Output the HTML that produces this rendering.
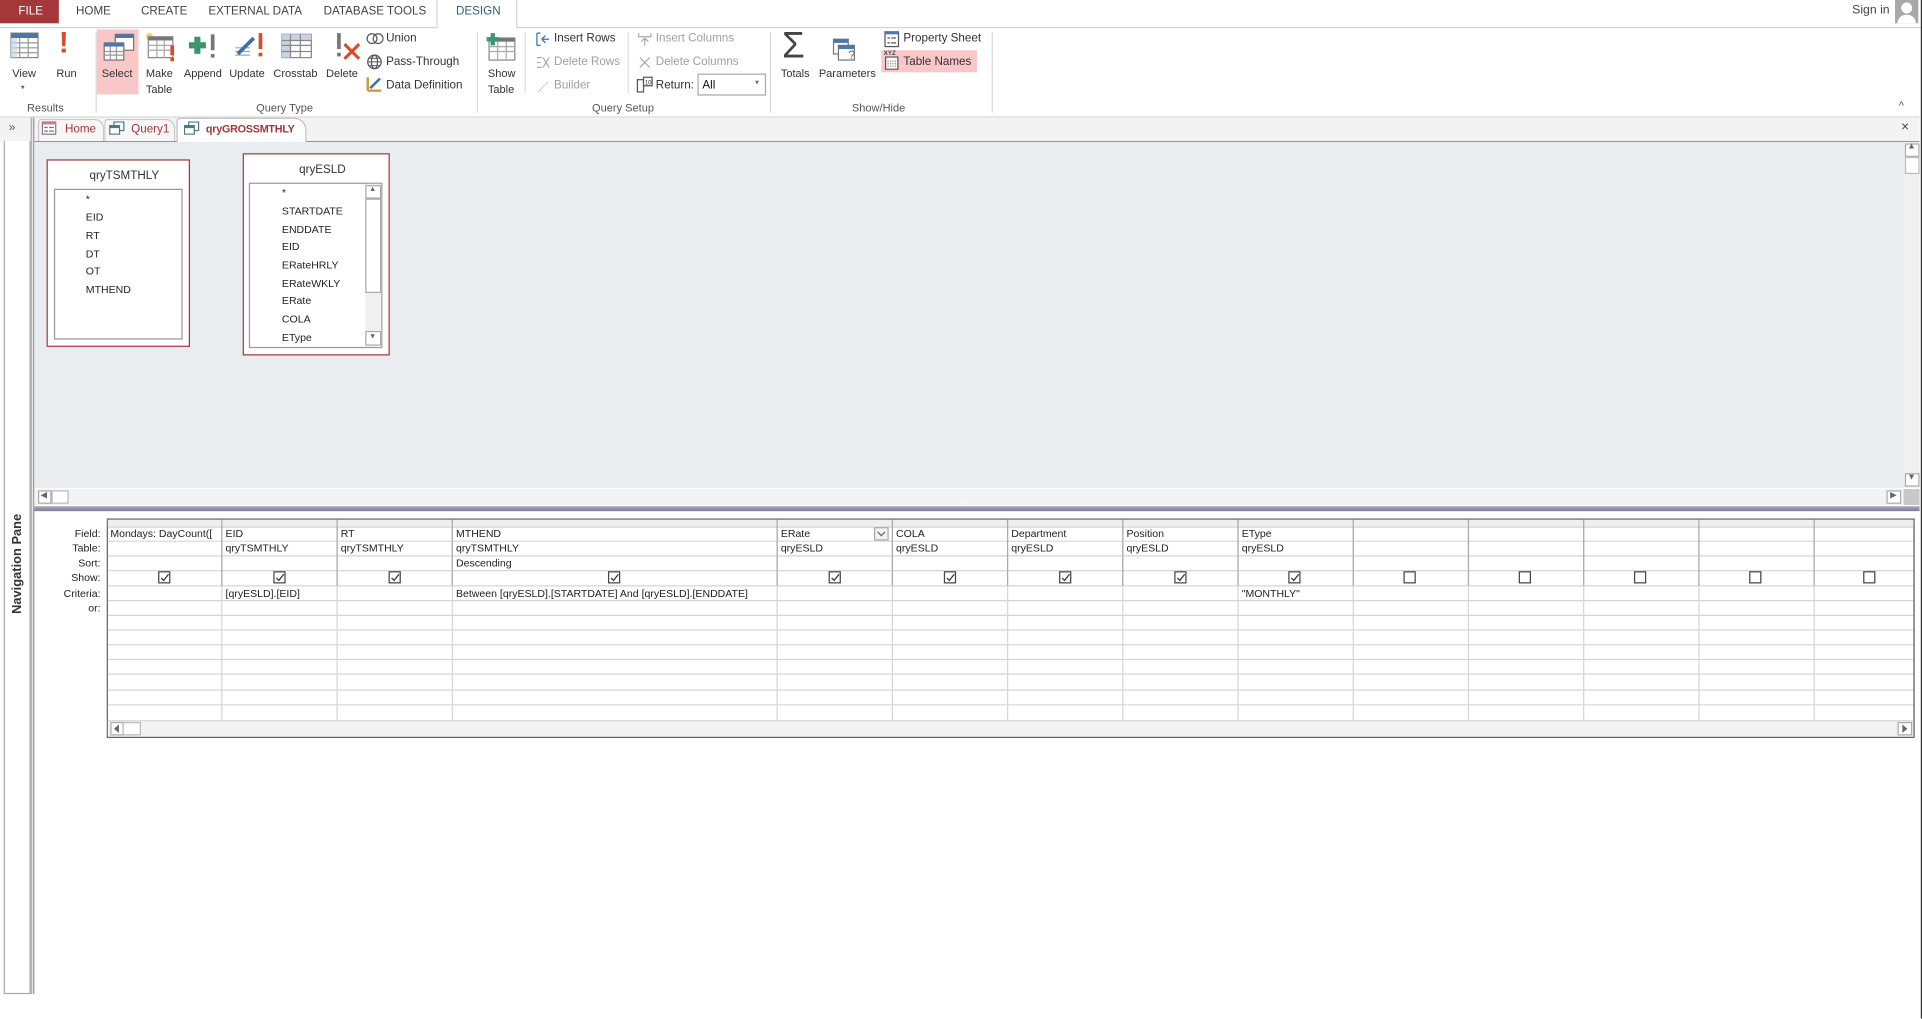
<!DOCTYPE html>
<html><head><meta charset="utf-8"><style>
*{margin:0;padding:0;box-sizing:border-box}
html,body{width:1922px;height:1018px;overflow:hidden;background:#fff}
#w{position:absolute;left:0;top:0;width:1568px;height:831px;transform:scale(1.22577);transform-origin:0 0;font-family:"Liberation Sans",sans-serif;color:#262626;font-size:9px}
.a{position:absolute}
.t{position:absolute;white-space:nowrap}
.tab{top:4px;font-size:9.5px;color:#444}
.lbl{font-size:9px;color:#333;text-align:center}
.grp{top:83px;font-size:9px;color:#555}
.sep{position:absolute;top:26px;width:1px;height:66px;background:#dadada}
.sm{font-size:9.5px;color:#333}
.dis{color:#a0a0a0}
.fl{position:absolute;font-size:8.6px;color:#222}
.gl{position:absolute;font-size:8.6px;color:#222;right:0}
.cb{position:absolute;width:10px;height:10px;border:1px solid #444;background:#fff}
.cb svg{position:absolute;left:0;top:0}
</style></head><body><div id="w">

<div class="a" style="left:0;top:0;width:48px;height:19px;background:#a4373a"></div>
<div class="t tab" style="left:15px;color:#fff">FILE</div>
<div class="t tab" style="left:62px">HOME</div>
<div class="t tab" style="left:115px">CREATE</div>
<div class="t tab" style="left:170px">EXTERNAL DATA</div>
<div class="t tab" style="left:264px">DATABASE TOOLS</div>
<div class="a" style="left:0;top:22px;width:356px;height:1px;background:#d4d4d4"></div>
<div class="a" style="left:421px;top:22px;width:1147px;height:1px;background:#d4d4d4"></div>
<div class="a" style="left:356px;top:0;width:1px;height:23px;background:#d4d4d4"></div>
<div class="a" style="left:421px;top:0;width:1px;height:23px;background:#d4d4d4"></div>
<div class="t tab" style="left:372px;color:#2a6478">DESIGN</div>
<div class="t" style="left:1511px;top:3px;font-size:10px;color:#444">Sign in</div>
<div class="a" style="left:1546px;top:0;width:19px;height:19px;background:#a8a8a8;overflow:hidden"><div class="a" style="left:5px;top:2px;width:9px;height:9px;border-radius:50%;background:#fff"></div><div class="a" style="left:2px;top:12px;width:15px;height:10px;border-radius:7px 7px 0 0;background:#fff"></div></div>
<div class="a" style="left:1567px;top:0;width:1px;height:831px;background:#333"></div>

<svg class="a" style="left:8px;top:26px" width="24" height="24"><rect x="1" y="1" width="22" height="20" fill="#fff" stroke="#888"/><rect x="1" y="1" width="22" height="4" fill="#4a77b0"/><path d="M1 9H23M1 13H23M1 17H23M8 5V21M15 5V21" stroke="#999" fill="none"/><rect x="1" y="5" width="5" height="16" fill="#cad8ea" opacity=".7"/></svg>
<div class="t lbl" style="left:10px;top:55px">View</div>
<div class="t" style="left:17px;top:68px;font-size:6px;color:#666">▾</div>
<div class="t" style="left:48px;top:22px;font-size:24px;color:#d84a2a;font-weight:bold">!</div>
<div class="t lbl" style="left:46px;top:55px">Run</div>
<div class="t grp" style="left:22px">Results</div>
<div class="sep" style="left:78px"></div>
<div class="a" style="left:79px;top:24px;width:34px;height:53px;background:#f9c7c7"></div>
<svg class="a" style="left:83px;top:27px" width="28" height="24"><rect x="11" y="1" width="15" height="13" fill="#fff" stroke="#777"/><rect x="11" y="1" width="15" height="3" fill="#4a77b0"/><rect x="2" y="8" width="16" height="14" fill="#fff" stroke="#777"/><rect x="2" y="8" width="16" height="3" fill="#4a77b0"/><path d="M2 15H18M2 18H18M7 11V22M12 11V22" stroke="#999"/></svg>
<div class="t lbl" style="left:83px;top:55px">Select</div>
<svg class="a" style="left:117px;top:25px" width="28" height="26"><circle cx="5" cy="5" r="3" fill="#f5d27a"/><rect x="4" y="5" width="20" height="17" fill="#fff" stroke="#888"/><rect x="4" y="5" width="20" height="3" fill="#777"/><path d="M4 12H24M4 16H24M11 8V22M17 8V22" stroke="#aaa"/><rect x="22" y="12" width="3" height="8" fill="#d84a2a"/><rect x="22" y="22" width="3" height="3" fill="#d84a2a"/></svg>
<div class="t lbl" style="left:119px;top:55px">Make</div>
<div class="t lbl" style="left:119px;top:68px">Table</div>
<svg class="a" style="left:154px;top:26px" width="26" height="24"><path d="M7 4V18M0 11H14" stroke="#3f9470" stroke-width="5"/><rect x="18" y="2" width="3" height="13" fill="#777"/><rect x="18" y="18" width="3" height="3" fill="#777"/></svg>
<div class="t lbl" style="left:150px;top:55px">Append</div>
<svg class="a" style="left:190px;top:25px" width="28" height="26"><path d="M2 14H14M2 17H14M2 20H14" stroke="#9aa"/><path d="M4 19L17 6" stroke="#3c6fb0" stroke-width="3"/><rect x="21" y="2" width="3" height="13" fill="#d84a2a"/><rect x="21" y="18" width="3" height="3" fill="#d84a2a"/></svg>
<div class="t lbl" style="left:187px;top:55px">Update</div>
<svg class="a" style="left:229px;top:27px" width="26" height="22"><rect x="1" y="1" width="24" height="19" fill="#fff" stroke="#888"/><rect x="1" y="1" width="24" height="5" fill="#c5d3e3"/><rect x="1" y="1" width="7" height="19" fill="#c5d3e3"/><path d="M1 6H25M1 10H25M1 15H25M8 1V20M16 1V20" stroke="#888"/></svg>
<div class="t lbl" style="left:223px;top:55px">Crosstab</div>
<svg class="a" style="left:273px;top:26px" width="22" height="24"><rect x="2" y="1" width="3" height="13" fill="#777"/><rect x="2" y="17" width="3" height="3" fill="#777"/><path d="M8 10L20 22M20 10L8 22" stroke="#d84a2a" stroke-width="2.5"/></svg>
<div class="t lbl" style="left:266px;top:55px">Delete</div>
<svg class="a" style="left:299px;top:26px" width="14" height="11"><circle cx="4.5" cy="5.5" r="4" fill="none" stroke="#555"/><circle cx="9.5" cy="5.5" r="4" fill="none" stroke="#555"/></svg>
<div class="t sm" style="left:315px;top:26px">Union</div>
<svg class="a" style="left:299px;top:44px" width="13" height="13"><circle cx="6.5" cy="6.5" r="5.5" fill="none" stroke="#555"/><ellipse cx="6.5" cy="6.5" rx="2.5" ry="5.5" fill="none" stroke="#555"/><path d="M1 6.5H12M2 3.5H11M2 9.5H11" stroke="#555" stroke-width=".8"/></svg>
<div class="t sm" style="left:315px;top:45px">Pass-Through</div>
<svg class="a" style="left:299px;top:62px" width="13" height="13"><path d="M1 12H12M1 1V12" stroke="#c79a3a" stroke-width="2"/><path d="M3 10L11 2" stroke="#3c6fb0" stroke-width="2"/></svg>
<div class="t sm" style="left:315px;top:64px">Data Definition</div>
<div class="t grp" style="left:209px">Query Type</div>
<div class="sep" style="left:389px"></div>
<svg class="a" style="left:396px;top:26px" width="26" height="24"><rect x="3" y="5" width="21" height="18" fill="#fff" stroke="#888"/><rect x="3" y="5" width="21" height="3" fill="#777"/><path d="M3 12H24M3 16H24M10 8V23M17 8V23" stroke="#aaa"/><path d="M6 1V11M1 6H11" stroke="#3f9470" stroke-width="3.5"/></svg>
<div class="t lbl" style="left:398px;top:55px">Show</div>
<div class="t lbl" style="left:398px;top:68px">Table</div>
<div class="a" style="left:428px;top:26px;width:1px;height:50px;background:#e0e0e0"></div>
<svg class="a" style="left:437px;top:26px" width="12" height="12"><path d="M1 1H4M1 11H4M1 1V11M5 6H11M5 6L8 3M5 6L8 9" stroke="#3c6fb0" fill="none"/></svg>
<div class="t sm" style="left:452px;top:26px">Insert Rows</div>
<svg class="a" style="left:437px;top:45px" width="12" height="12"><path d="M1 2H5M1 6H4M1 10H5M6 2L11 10M11 2L6 10" stroke="#aaa" fill="none"/></svg>
<div class="t sm dis" style="left:452px;top:45px">Delete Rows</div>
<svg class="a" style="left:437px;top:64px" width="12" height="12"><path d="M2 11L10 3" stroke="#aaa" stroke-dasharray="1 1"/></svg>
<div class="t sm dis" style="left:452px;top:64px">Builder</div>
<div class="a" style="left:512px;top:26px;width:1px;height:50px;background:#e0e0e0"></div>
<svg class="a" style="left:520px;top:26px" width="12" height="12"><path d="M1 1V4H11V1M6 5V11M6 5L3 8M6 5L9 8" stroke="#aaa" fill="none"/></svg>
<div class="t sm dis" style="left:535px;top:26px">Insert Columns</div>
<svg class="a" style="left:520px;top:45px" width="12" height="12"><path d="M2 2L10 10M10 2L2 10" stroke="#aaa"/></svg>
<div class="t sm dis" style="left:535px;top:45px">Delete Columns</div>
<svg class="a" style="left:519px;top:62px" width="14" height="14"><rect x="1" y="3" width="5" height="10" fill="none" stroke="#555"/><rect x="6" y="1" width="7" height="7" fill="#fff" stroke="#555"/><text x="7" y="7" font-size="5" font-family="Liberation Sans" fill="#333">10</text></svg>
<div class="t sm" style="left:535px;top:64px">Return:</div>
<div class="a" style="left:569px;top:60px;width:56px;height:18px;border:1px solid #aaa;background:#fff"></div>
<div class="t sm" style="left:573px;top:64px;color:#111">All</div>
<div class="t" style="left:616px;top:64px;font-size:6px;color:#666">▾</div>
<div class="t grp" style="left:483px">Query Setup</div>
<div class="sep" style="left:628px"></div>
<div class="t" style="left:638px;top:21px;font-size:30px;color:#444">Σ</div>
<div class="t lbl" style="left:637px;top:55px">Totals</div>
<svg class="a" style="left:679px;top:26px" width="26" height="24"><rect x="1" y="6" width="12" height="12" fill="#fff" stroke="#777"/><rect x="1" y="6" width="12" height="3" fill="#4a77b0"/><rect x="5" y="11" width="13" height="12" fill="#fff" stroke="#777"/><rect x="5" y="11" width="13" height="3" fill="#4a77b0"/><text x="13" y="22" font-size="10" fill="#3c6fb0" font-family="Liberation Sans">?</text></svg>
<div class="t lbl" style="left:668px;top:55px">Parameters</div>
<svg class="a" style="left:721px;top:25px" width="13" height="14"><rect x="1" y="1" width="11" height="12" fill="#fff" stroke="#555"/><rect x="1" y="1" width="11" height="2" fill="#4a77b0"/><path d="M3 6H5M3 10H5M6 6H10M6 10H10" stroke="#555"/></svg>
<div class="t sm" style="left:737px;top:26px">Property Sheet</div>
<div class="a" style="left:719px;top:41px;width:78px;height:18px;background:#f9c7c7"></div>
<div class="t" style="left:721px;top:41px;font-size:5px;color:#444;font-weight:bold">XYZ</div>
<svg class="a" style="left:722px;top:46px" width="11" height="11"><rect x=".5" y=".5" width="10" height="10" fill="#fff" stroke="#555"/><path d="M2 4H9M2 6H9M2 8H9" stroke="#888" stroke-dasharray="1 1"/></svg>
<div class="t sm" style="left:737px;top:45px">Table Names</div>
<div class="t grp" style="left:695px">Show/Hide</div>
<div class="sep" style="left:809px"></div>
<div class="t" style="left:1549px;top:81px;font-size:9px;color:#555">^</div>
<div class="a" style="left:0;top:95px;width:1566px;height:1px;background:#d4d4d4"></div>

<div class="a" style="left:0;top:96px;width:1566px;height:20px;background:#f3f3f3"></div>
<div class="a" style="left:28px;top:115px;width:1538px;height:1px;background:#999"></div>
<div class="t" style="left:7px;top:99px;font-size:10px;color:#555">»</div>
<div class="a" style="left:31px;top:97px;width:54px;height:18px;border:1px solid #c8c8c8;border-bottom:none;border-radius:3px 8px 0 0;background:#f7f7f7"></div>
<svg class="a" style="left:34px;top:99px" width="12" height="11"><rect x=".5" y=".5" width="11" height="10" fill="#fff" stroke="#8a6a8a"/><rect x=".5" y=".5" width="11" height="2" fill="#c87a9a"/><path d="M2 5H5M2 8H5M6 5H10M6 8H10" stroke="#777"/></svg>
<div class="t" style="left:53px;top:100px;font-size:9.5px;color:#a4373a">Home</div>
<div class="a" style="left:85px;top:97px;width:58px;height:18px;border:1px solid #c8c8c8;border-bottom:none;border-radius:3px 8px 0 0;background:#f7f7f7"></div>
<svg class="a" style="left:89px;top:99px" width="13" height="11"><rect x="4" y=".5" width="8" height="7" fill="#fff" stroke="#4a7a8a"/><rect x=".5" y="3.5" width="8" height="7" fill="#fff" stroke="#4a7a8a"/><rect x=".5" y="3.5" width="8" height="2" fill="#4a7a8a"/></svg>
<div class="t" style="left:107px;top:100px;font-size:9.5px;color:#a4373a">Query1</div>
<div class="a" style="left:144px;top:96px;width:106px;height:20px;border:1px solid #c0c0c0;border-bottom:none;border-radius:3px 10px 0 0;background:#fff"></div>
<svg class="a" style="left:150px;top:99px" width="13" height="11"><rect x="4" y=".5" width="8" height="7" fill="#fff" stroke="#4a7a8a"/><rect x=".5" y="3.5" width="8" height="7" fill="#fff" stroke="#4a7a8a"/><rect x=".5" y="3.5" width="8" height="2" fill="#4a7a8a"/></svg>
<div class="t" style="left:168px;top:100px;font-size:8.8px;color:#a4373a;font-weight:bold;letter-spacing:-.2px">qryGROSSMTHLY</div>
<div class="t" style="left:1551px;top:98px;font-size:11px;color:#444">×</div>

<div class="a" style="left:3px;top:115px;width:22px;height:696px;border:1px solid #aaa;border-top:none;background:#fff"></div>
<div class="a" style="left:25px;top:96px;width:3px;height:715px;background:#e6e6e6;border-left:1px solid #aaa;border-right:1px solid #999"></div>
<div class="t" style="left:14px;top:460px;transform:translate(-50%,-50%) rotate(-90deg);font-size:10.5px;font-weight:bold;color:#333">Navigation Pane</div>

<div class="a" style="left:28px;top:116px;width:1525px;height:282px;background:#e9edf0"></div>
<div class="a" style="left:1553px;top:116px;width:13px;height:282px;background:#f0f0f0"></div>
<div class="a" style="left:1554px;top:117px;width:12px;height:11px;border:1px solid #aaa;background:#fff"></div>
<div class="t" style="left:1556px;top:116px;font-size:7px;color:#666">▲</div>
<div class="a" style="left:1554px;top:128px;width:12px;height:14px;border:1px solid #bbb;background:#fff"></div>
<div class="a" style="left:1554px;top:386px;width:12px;height:11px;border:1px solid #aaa;background:#fff"></div>
<div class="t" style="left:1556px;top:386px;font-size:7px;color:#666">▼</div>
<div class="a" style="left:28px;top:399px;width:1525px;height:13px;background:#f3f3f3"></div>
<div class="a" style="left:31px;top:400px;width:11px;height:11px;border:1px solid #aaa;background:#fff"></div>
<div class="t" style="left:33px;top:400px;font-size:7px;color:#666">◀</div>
<div class="a" style="left:42px;top:400px;width:14px;height:11px;border:1px solid #bbb;background:#fff"></div>
<div class="a" style="left:1539px;top:400px;width:12px;height:11px;border:1px solid #aaa;background:#fff"></div>
<div class="t" style="left:1542px;top:400px;font-size:7px;color:#666">▶</div>
<div class="a" style="left:1553px;top:399px;width:13px;height:13px;background:#c8c8cc"></div>
<div class="a" style="left:28px;top:413px;width:1538px;height:4px;background:linear-gradient(#a9a8bd,#7d7c96)"></div>
<div class="t" style="left:782px;top:409px;font-size:6px;color:#fff;letter-spacing:-1px">::::::::::</div>

<div class="a" style="left:38px;top:130px;width:117px;height:153px;border:1px solid #a4373a;background:#fff"></div>
<div class="t" style="left:73px;top:138px;font-size:9.5px;color:#333">qryTSMTHLY</div>
<div class="a" style="left:44px;top:154px;width:105px;height:123px;border:1px solid #999;background:#fff"></div>
<div class="fl" style="left:70px;top:157px">*</div>
<div class="fl" style="left:70px;top:172px">EID</div>
<div class="fl" style="left:70px;top:187px">RT</div>
<div class="fl" style="left:70px;top:202px">DT</div>
<div class="fl" style="left:70px;top:216px">OT</div>
<div class="fl" style="left:70px;top:231px">MTHEND</div>

<div class="a" style="left:198px;top:125px;width:120px;height:165px;border:1px solid #a4373a;background:#fff"></div>
<div class="t" style="left:244px;top:133px;font-size:9.5px;color:#333">qryESLD</div>
<div class="a" style="left:203px;top:149px;width:109px;height:135px;border:1px solid #999;background:#fff"></div>
<div class="a" style="left:298px;top:150px;width:13px;height:133px;background:#f0f0f0"></div>
<div class="a" style="left:298px;top:151px;width:13px;height:11px;border:1px solid #aaa;background:#fff"></div>
<div class="t" style="left:301px;top:152px;font-size:6px;color:#666">▲</div>
<div class="a" style="left:298px;top:162px;width:13px;height:77px;border:1px solid #aaa;background:#fff"></div>
<div class="a" style="left:298px;top:270px;width:13px;height:12px;border:1px solid #aaa;background:#fff"></div>
<div class="t" style="left:301px;top:272px;font-size:6px;color:#666">▼</div>
<div class="fl" style="left:230px;top:152px">*</div>
<div class="fl" style="left:230px;top:167px">STARTDATE</div>
<div class="fl" style="left:230px;top:182px">ENDDATE</div>
<div class="fl" style="left:230px;top:196px">EID</div>
<div class="fl" style="left:230px;top:211px">ERateHRLY</div>
<div class="fl" style="left:230px;top:226px">ERateWKLY</div>
<div class="fl" style="left:230px;top:240px">ERate</div>
<div class="fl" style="left:230px;top:255px">COLA</div>
<div class="fl" style="left:230px;top:270px">EType</div>

<div class="a" style="left:28px;top:428px;width:54px;height:80px">
<div class="gl" style="top:2px">Field:</div>
<div class="gl" style="top:14px">Table:</div>
<div class="gl" style="top:26px">Sort:</div>
<div class="gl" style="top:38px">Show:</div>
<div class="gl" style="top:51px">Criteria:</div>
<div class="gl" style="top:63px">or:</div>
</div>

<svg class="a" style="left:87px;top:423px" width="1476" height="180">
<rect x=".5" y=".5" width="1474" height="178" fill="#fff" stroke="#555"/>
<rect x="1" y="1" width="1473" height="6" fill="#efefef"/>
<rect x="1" y="165" width="1473" height="13" fill="#f2f2f2"/>
<g stroke="#d6d6d6">
<path d="M1 7H1474M1 18.5H1474M1 30.5H1474M1 42.5H1474M1 55H1474M1 67H1474M1 79H1474M1 91H1474M1 103H1474M1 115H1474M1 127H1474M1 140H1474M1 152H1474M1 165H1474"/>
<path d="M94 1V165M188 1V165M282 1V165M547 1V165M641 1V165M735 1V165M829 1V165M923 1V165M1017 1V165M1111 1V165M1205 1V165M1299 1V165M1393 1V165"/>
</g>
<g stroke="#aaa"><path d="M94 1V55M188 1V55M282 1V55M547 1V55M641 1V55M735 1V55M829 1V55M923 1V55M1017 1V55M1111 1V55M1205 1V55M1299 1V55M1393 1V55"/></g>
<rect x="3.5" y="166.5" width="10" height="10" fill="#fff" stroke="#aaa"/><path d="M10 168L6 171.5L10 175Z" fill="#666"/>
<rect x="13.5" y="166.5" width="14" height="10" fill="#fff" stroke="#bbb"/>
<rect x="1461.5" y="166.5" width="11" height="10" fill="#fff" stroke="#aaa"/><path d="M1465 168L1469 171.5L1465 175Z" fill="#666"/>
<rect x="626.5" y="7.5" width="11" height="10" fill="#f2f2f2" stroke="#aaa"/><path d="M629 11L632 14L635 11" stroke="#666" fill="none"/>
</svg>

<div class="fl" style="left:90px;top:430px">Mondays: DayCount([</div>
<div class="fl" style="left:184px;top:430px">EID</div>
<div class="fl" style="left:278px;top:430px">RT</div>
<div class="fl" style="left:372px;top:430px">MTHEND</div>
<div class="fl" style="left:637px;top:430px">ERate</div>
<div class="fl" style="left:731px;top:430px">COLA</div>
<div class="fl" style="left:825px;top:430px">Department</div>
<div class="fl" style="left:919px;top:430px">Position</div>
<div class="fl" style="left:1013px;top:430px">EType</div>

<div class="fl" style="left:184px;top:442px">qryTSMTHLY</div>
<div class="fl" style="left:278px;top:442px">qryTSMTHLY</div>
<div class="fl" style="left:372px;top:442px">qryTSMTHLY</div>
<div class="fl" style="left:637px;top:442px">qryESLD</div>
<div class="fl" style="left:731px;top:442px">qryESLD</div>
<div class="fl" style="left:825px;top:442px">qryESLD</div>
<div class="fl" style="left:919px;top:442px">qryESLD</div>
<div class="fl" style="left:1013px;top:442px">qryESLD</div>
<div class="fl" style="left:372px;top:454px">Descending</div>
<div class="fl" style="left:184px;top:479px">[qryESLD].[EID]</div>
<div class="fl" style="left:372px;top:479px">Between [qryESLD].[STARTDATE] And [qryESLD].[ENDDATE]</div>
<div class="fl" style="left:1013px;top:479px">"MONTHLY"</div>

<div class="cb" style="left:129px;top:466px"><svg width="9" height="9"><path d="M1.5 4.5L3.5 6.5L7.5 1.5" stroke="#333" fill="none"/></svg></div>
<div class="cb" style="left:223px;top:466px"><svg width="9" height="9"><path d="M1.5 4.5L3.5 6.5L7.5 1.5" stroke="#333" fill="none"/></svg></div>
<div class="cb" style="left:317px;top:466px"><svg width="9" height="9"><path d="M1.5 4.5L3.5 6.5L7.5 1.5" stroke="#333" fill="none"/></svg></div>
<div class="cb" style="left:496px;top:466px"><svg width="9" height="9"><path d="M1.5 4.5L3.5 6.5L7.5 1.5" stroke="#333" fill="none"/></svg></div>
<div class="cb" style="left:676px;top:466px"><svg width="9" height="9"><path d="M1.5 4.5L3.5 6.5L7.5 1.5" stroke="#333" fill="none"/></svg></div>
<div class="cb" style="left:770px;top:466px"><svg width="9" height="9"><path d="M1.5 4.5L3.5 6.5L7.5 1.5" stroke="#333" fill="none"/></svg></div>
<div class="cb" style="left:864px;top:466px"><svg width="9" height="9"><path d="M1.5 4.5L3.5 6.5L7.5 1.5" stroke="#333" fill="none"/></svg></div>
<div class="cb" style="left:958px;top:466px"><svg width="9" height="9"><path d="M1.5 4.5L3.5 6.5L7.5 1.5" stroke="#333" fill="none"/></svg></div>
<div class="cb" style="left:1051px;top:466px"><svg width="9" height="9"><path d="M1.5 4.5L3.5 6.5L7.5 1.5" stroke="#333" fill="none"/></svg></div>
<div class="cb" style="left:1145px;top:466px"></div>
<div class="cb" style="left:1239px;top:466px"></div>
<div class="cb" style="left:1333px;top:466px"></div>
<div class="cb" style="left:1427px;top:466px"></div>
<div class="cb" style="left:1520px;top:466px"></div>

</div></body></html>
